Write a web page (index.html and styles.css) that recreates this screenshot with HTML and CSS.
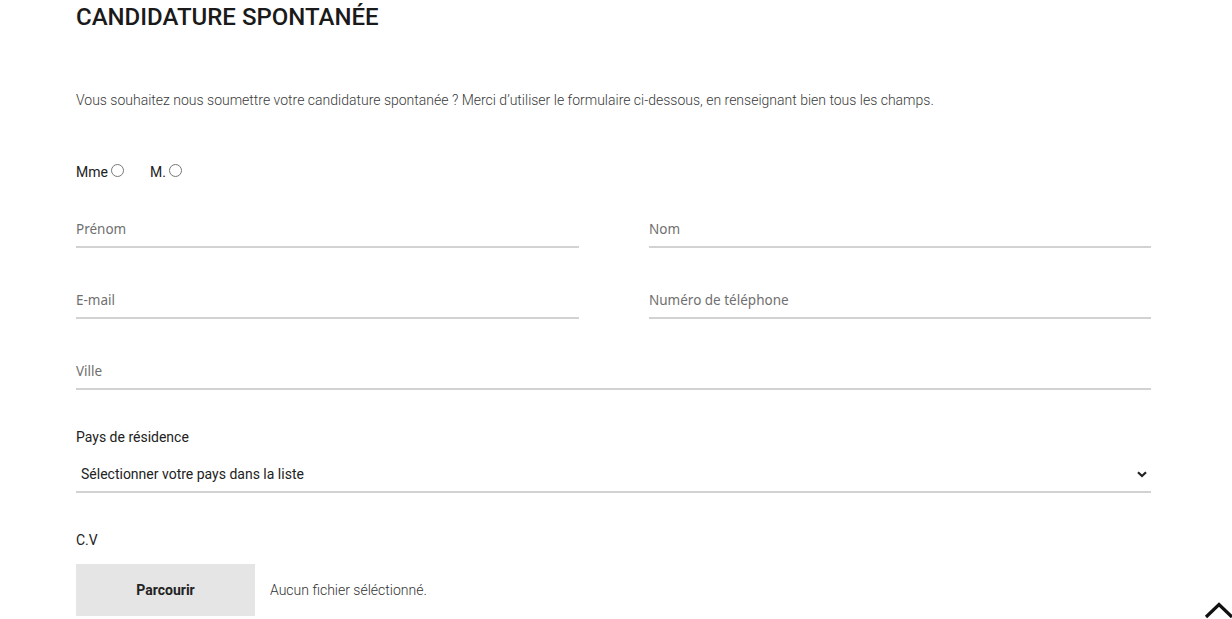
FILE: index.html
```html
<!DOCTYPE html>
<html lang="fr">
<head>
<meta charset="utf-8">
<title>Candidature spontanée</title>
<link rel="stylesheet" href="styles.css">
</head>
<body>
<main class="page">
  <h1 class="title">CANDIDATURE SPONTANÉE</h1>
  <p class="intro">Vous souhaitez nous soumettre votre candidature spontanée ? Merci d’utiliser le formulaire ci-dessous, en renseignant bien tous les champs.</p>
  <form class="form">
    <div class="civility">
      <label class="radio">Mme<span class="radio-dot"></span></label>
      <label class="radio">M.<span class="radio-dot"></span></label>
    </div>
    <div class="row two">
      <div class="field"><span class="placeholder">Prénom</span></div>
      <div class="field"><span class="placeholder">Nom</span></div>
    </div>
    <div class="row two">
      <div class="field"><span class="placeholder">E-mail</span></div>
      <div class="field"><span class="placeholder">Numéro de téléphone</span></div>
    </div>
    <div class="row">
      <div class="field"><span class="placeholder">Ville</span></div>
    </div>
    <div class="select-block">
      <div class="label">Pays de résidence</div>
      <div class="select">
        <span>Sélectionner votre pays dans la liste</span>
        <svg class="chev" width="10" height="7" viewBox="0 0 10 7"><path d="M1 1.2 L5 5 L9 1.2" fill="none" stroke="#222" stroke-width="2.2"/></svg>
      </div>
    </div>
    <div class="file-block">
      <div class="label">C.V</div>
      <div class="file">
        <span class="browse">Parcourir</span>
        <span class="nofile">Aucun fichier séléctionné.</span>
      </div>
    </div>
  </form>
</main>
<a class="to-top" href="#"><svg width="30" height="18" viewBox="0 0 30 18"><path d="M2 16 L15 3.5 L28 16" fill="none" stroke="#111" stroke-width="3.2"/></svg></a>
</body>
</html>
```
FILE: styles.css
```css
html, body {
  margin: 0;
  padding: 0;
  background: #fff;
  overflow: hidden;
}
body {
  font-family: Roboto, "Liberation Sans", sans-serif;
  color: #333;
}
.page {
  width: 1075px;
  padding-left: 76px;
}
.title {
  margin: 0;
  padding-top: 3px;
  font-size: 24px;
  line-height: 28px;
  font-weight: 500;
  color: #1a1a1a;
}
.intro {
  margin: 59px 0 0;
  font-size: 14px;
  line-height: 20px;
  font-weight: 300;
  color: #3a3a3a;
}
.form {
  margin-top: 52px;
}
.civility {
  display: flex;
  gap: 26px;
  height: 20px;
  font-size: 14px;
  line-height: 20px;
  color: #222;
}
.radio {
  display: flex;
  align-items: center;
}
.radio-dot {
  width: 11px;
  height: 11px;
  border: 1px solid #777;
  border-radius: 50%;
  margin-left: 3px;
  margin-top: -3px;
}
.row {
  display: flex;
  gap: 70px;
  margin-top: 37px;
}
.row + .row {
  margin-top: 42px;
}
.field {
  flex: 1;
  height: 29px;
  border-bottom: 2px solid #d2d2d2;
  box-sizing: border-box;
}
.row.two .field {
  flex: 0 0 503px;
}
.row.two .field + .field {
  flex: 0 0 502px;
}
.placeholder {
  display: block;
  font-family: "Noto Sans", "Open Sans", sans-serif;
  font-size: 13.5px;
  line-height: 20px;
  color: #6f6f6f;
}
.select-block {
  margin-top: 37px;
}
.label {
  font-size: 14px;
  line-height: 20px;
  color: #222;
}
.select {
  display: flex;
  align-items: center;
  justify-content: space-between;
  margin-top: 12px;
  height: 34px;
  box-sizing: border-box;
  padding: 5px 4px 7px 5px;
  border-bottom: 2px solid #d2d2d2;
  font-size: 14px;
  color: #222;
  line-height: 20px;
}
.file-block {
  margin-top: 37px;
}
.file {
  display: flex;
  align-items: center;
  margin-top: 14px;
}
.browse {
  width: 179px;
  height: 52px;
  background: #e5e5e5;
  display: flex;
  align-items: center;
  justify-content: center;
  font-weight: 700;
  font-size: 14px;
  color: #222;
}
.nofile {
  margin-left: 15px;
  font-size: 14px;
  font-weight: 300;
  color: #333;
}
.to-top {
  position: fixed;
  right: -2px;
  bottom: 0;
  display: block;
  width: 30px;
  height: 18px;
}
```
